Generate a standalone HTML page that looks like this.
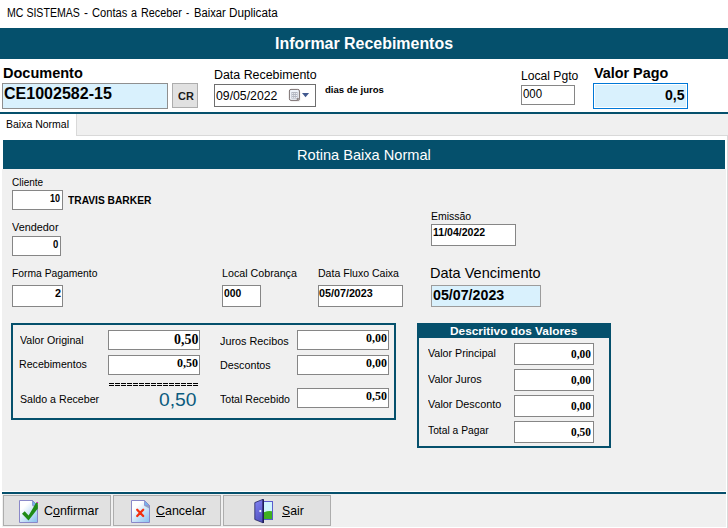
<!DOCTYPE html>
<html><head><meta charset="utf-8"><title>MC SISTEMAS - Contas a Receber - Baixar Duplicata</title>
<style>
html,body{margin:0;padding:0;}
body{width:728px;height:528px;position:relative;overflow:hidden;background:#f0f0f0;font-family:"Liberation Sans",sans-serif;}
body>div,body>svg{position:absolute;}
.t{position:absolute;line-height:1;white-space:pre;transform-origin:0 50%;}
.eq{width:90px;height:3px;}
.eq i{position:absolute;top:0;width:5px;height:3px;border-top:1px solid #000;border-bottom:1px solid #000;box-sizing:border-box;}
</style></head><body>
<div style="left:0px;top:0px;width:728px;height:28px;background:#fff;"></div>
<div id="a1" class="t" style="left:6.56px;top:6.74px;font-size:12px;color:#000;transform:scaleX(0.8810);">MC SISTEMAS</div>
<div id="a2" class="t" style="left:84.20px;top:6.74px;font-size:12px;color:#000;transform:scaleX(0.9860);">-</div>
<div id="a3" class="t" style="left:91.80px;top:6.74px;font-size:12px;color:#000;transform:scaleX(0.9286);">Contas</div>
<div id="a4" class="t" style="left:131.40px;top:6.74px;font-size:12px;color:#000;transform:scaleX(0.8977);">a</div>
<div id="a5" class="t" style="left:140.66px;top:6.74px;font-size:12px;color:#000;transform:scaleX(0.8981);">Receber</div>
<div id="a6" class="t" style="left:185.70px;top:6.74px;font-size:12px;color:#000;transform:scaleX(0.7958);">-</div>
<div id="a7" class="t" style="left:193.56px;top:6.74px;font-size:12px;color:#000;transform:scaleX(0.9312);">Baixar</div>
<div id="a8" class="t" style="left:228.90px;top:6.74px;font-size:12px;color:#000;transform:scaleX(0.9732);">Duplicata</div>
<div style="left:0px;top:28px;width:728px;height:31px;background:#05506c;"></div>
<div id="hdr" class="t" style="left:274.60px;top:36.41px;font-size:16px;color:#fff;transform:scaleX(0.9962);font-weight:bold;">Informar Recebimentos</div>
<div style="left:0px;top:59px;width:728px;height:53px;background:#fff;"></div>
<div id="ldoc" class="t" style="left:2.60px;top:65.20px;font-size:15px;color:#000;transform:scaleX(0.9673);font-weight:bold;">Documento</div>
<div style="left:2px;top:83px;width:166px;height:26px;background:#d9f1fd;border:1px solid #8f8f8f;box-sizing:border-box;"></div>
<div id="vdoc" class="t" style="left:3.60px;top:85.86px;font-size:16px;color:#000;transform:scaleX(1.0014);font-weight:bold;">CE1002582-15</div>
<div style="left:172px;top:83px;width:26px;height:25px;background:#e1e1e1;border:1px solid #adadad;box-sizing:border-box;"></div>
<div id="cr" class="t" style="left:177.80px;top:90.59px;font-size:11px;color:#1a1a1a;transform:scaleX(0.9947);font-weight:bold;">CR</div>
<div id="ldata" class="t" style="left:213.80px;top:68.74px;font-size:12px;color:#000;transform:scaleX(1.0334);">Data Recebimento</div>
<div style="left:214px;top:84px;width:102px;height:23px;background:#fff;border:1px solid #6e6e6e;box-sizing:border-box;"></div>
<div id="vdata" class="t" style="left:216.40px;top:90.48px;font-size:12.6px;color:#000;transform:scaleX(0.9730);">09/05/2022</div>
<svg style="left:288px;top:88px" width="24" height="15" viewBox="0 0 24 15">
<rect x="2.3" y="2.6" width="10" height="11" rx="1.6" fill="#d8d8d8" opacity="0.7"/>
<rect x="1.4" y="1.4" width="10" height="11" rx="1.6" fill="#eef2fa" stroke="#7c7070" stroke-width="1"/>
<rect x="3.4" y="4" width="6.2" height="6.6" fill="#b3b7c3"/>
<path d="M4.2 5.1h1v1h-1zM6.2 5.1h1v1h-1zM8.1 5.1h1v1h-1zM4.2 7h1v1h-1zM6.2 7h1v1h-1zM8.1 7h1v1h-1zM4.2 8.9h1v1h-1zM6.2 8.9h1v1h-1zM8.1 8.9h1v1h-1z" fill="#f4f6fb"/>
<path d="M8.8 12.4V10.2H11.4Z" fill="#7c7070"/>
<path d="M14 4.9H21.1L17.55 9.3Z" fill="#41598f"/></svg>
<div id="dias" class="t" style="left:324.70px;top:85.04px;font-size:9.4px;color:#000;transform:scaleX(1.0176);font-weight:bold;">dias de juros</div>
<div id="llocal" class="t" style="left:520.90px;top:69.74px;font-size:12px;color:#000;transform:scaleX(1.0104);">Local Pgto</div>
<div style="left:521px;top:85px;width:54px;height:20px;background:#fff;border:1px solid #868686;box-sizing:border-box;"></div>
<div id="vlocal" class="t" style="left:522.50px;top:88.44px;font-size:12.3px;color:#000;transform:scaleX(0.9310);">000</div>
<div id="lvalor" class="t" style="left:594.00px;top:65.20px;font-size:15px;color:#000;transform:scaleX(0.9572);font-weight:bold;">Valor Pago</div>
<div style="left:593px;top:83px;width:95px;height:26px;background:#d9f1fd;border:1px solid #0078d7;box-sizing:border-box;box-shadow:inset 0 0 0 1px #fff;"></div>
<div id="vvalor" class="t" style="left:665.20px;top:87.40px;font-size:15px;color:#000;transform:scaleX(0.9400);font-weight:bold;">0,5</div>
<div style="left:0px;top:112px;width:728px;height:2px;background:#05506c;"></div>
<div style="left:0px;top:114px;width:728px;height:414px;background:#f0f0f0;"></div>
<div style="left:0px;top:135px;width:728px;height:393px;background:#fff;border:1px solid #d9d9d9;box-sizing:border-box;border-left:none;border-bottom:none;"></div>
<div style="left:0px;top:114px;width:77px;height:22px;background:#fff;border:1px solid #d9d9d9;box-sizing:border-box;border-left:none;border-top:none;border-bottom:none;"></div>
<div id="tab" class="t" style="left:6.16px;top:118.69px;font-size:11px;color:#000;transform:scaleX(0.9548);">Baixa Normal</div>
<div style="left:2px;top:169px;width:724px;height:322px;background:#f0f0f0;"></div>
<div style="left:3px;top:140px;width:722px;height:29px;background:#05506c;"></div>
<div style="left:2px;top:492px;width:724px;height:2px;background:#05506c;"></div>
<div style="left:2px;top:494px;width:724px;height:33px;background:#f0f0f0;"></div>
<div id="rot" class="t" style="left:296.82px;top:147.30px;font-size:15px;color:#fff;transform:scaleX(0.9726);">Rotina Baixa Normal</div>
<div id="lcli" class="t" style="left:12.40px;top:176.59px;font-size:11px;color:#000;transform:scaleX(0.9082);">Cliente</div>
<div style="left:12px;top:190px;width:51px;height:20px;background:#fff;border:1px solid #868686;box-sizing:border-box;"></div>
<div id="vcli" class="t" style="left:49.70px;top:192.79px;font-size:11px;color:#000;transform:scaleX(0.8192);font-weight:bold;">10</div>
<div id="travis" class="t" style="left:67.80px;top:194.55px;font-size:11.4px;color:#000;transform:scaleX(0.8979);font-weight:bold;">TRAVIS BARKER</div>
<div id="lven" class="t" style="left:12.40px;top:222.09px;font-size:11px;color:#000;transform:scaleX(0.9872);">Vendedor</div>
<div style="left:12px;top:236px;width:49px;height:20px;background:#fff;border:1px solid #868686;box-sizing:border-box;"></div>
<div id="a9" class="t" style="left:52.60px;top:238.79px;font-size:11px;color:#000;transform:scaleX(0.8666);font-weight:bold;">0</div>
<div id="lforma" class="t" style="left:12.16px;top:267.69px;font-size:11px;color:#000;transform:scaleX(0.9378);">Forma Pagamento</div>
<div style="left:12px;top:285px;width:51px;height:22px;background:#fff;border:1px solid #868686;box-sizing:border-box;"></div>
<div id="a10" class="t" style="left:55.40px;top:287.69px;font-size:11px;color:#000;transform:scaleX(0.9810);font-weight:bold;">2</div>
<div id="lcob" class="t" style="left:221.90px;top:267.79px;font-size:11px;color:#000;transform:scaleX(0.9720);">Local Cobrança</div>
<div style="left:222px;top:285px;width:39px;height:22px;background:#fff;border:1px solid #868686;box-sizing:border-box;"></div>
<div id="vcob" class="t" style="left:223.50px;top:287.69px;font-size:11px;color:#000;transform:scaleX(0.9374);font-weight:bold;">000</div>
<div id="lfluxo" class="t" style="left:318.16px;top:267.79px;font-size:11px;color:#000;transform:scaleX(0.9595);">Data Fluxo Caixa</div>
<div style="left:318px;top:285px;width:85px;height:22px;background:#fff;border:1px solid #868686;box-sizing:border-box;"></div>
<div id="vfluxo" class="t" style="left:319.20px;top:287.69px;font-size:11px;color:#000;transform:scaleX(0.9772);font-weight:bold;">05/07/2023</div>
<div id="lemi" class="t" style="left:431.16px;top:210.59px;font-size:11px;color:#000;transform:scaleX(0.9510);">Emissão</div>
<div style="left:431px;top:224px;width:85px;height:22px;background:#fff;border:1px solid #868686;box-sizing:border-box;"></div>
<div id="vemi" class="t" style="left:432.90px;top:227.39px;font-size:11px;color:#000;transform:scaleX(0.9568);font-weight:bold;">11/04/2022</div>
<div id="lvenc" class="t" style="left:429.80px;top:264.90px;font-size:15px;color:#000;transform:scaleX(0.9681);">Data Vencimento</div>
<div style="left:431px;top:285px;width:110px;height:22px;background:#d9f1fd;border:1px solid #9c9c9c;box-sizing:border-box;"></div>
<div id="vvenc" class="t" style="left:432.60px;top:287.20px;font-size:15px;color:#000;transform:scaleX(0.9484);font-weight:bold;">05/07/2023</div>
<div style="left:11px;top:323px;width:385px;height:97px;border:2px solid #05506c;box-sizing:border-box;"></div>
<div id="lvo" class="t" style="left:19.50px;top:334.69px;font-size:11px;color:#000;transform:scaleX(0.9662);">Valor Original</div>
<div style="left:108px;top:330px;width:92px;height:20px;background:#fff;border:1px solid #868686;box-sizing:border-box;"></div>
<div id="vvo" class="t" style="left:173.50px;top:331.94px;font-size:14.4px;color:#000;transform:scaleX(0.9683);font-family:'Liberation Serif',serif;font-weight:bold;">0,50</div>
<div id="lrec" class="t" style="left:18.90px;top:358.59px;font-size:11px;color:#000;transform:scaleX(0.9657);">Recebimentos</div>
<div style="left:108px;top:355px;width:92px;height:20px;background:#fff;border:1px solid #868686;box-sizing:border-box;"></div>
<div id="vrec" class="t" style="left:177.10px;top:357.18px;font-size:12.2px;color:#000;transform:scaleX(0.9855);font-family:'Liberation Serif',serif;font-weight:bold;">0,50</div>
<div class="eq" style="left:109.3px;top:383px"><i style="left:0px"></i><i style="left:6px"></i><i style="left:12px"></i><i style="left:18px"></i><i style="left:24px"></i><i style="left:30px"></i><i style="left:36px"></i><i style="left:42px"></i><i style="left:48px"></i><i style="left:54px"></i><i style="left:60px"></i><i style="left:66px"></i><i style="left:72px"></i><i style="left:78px"></i><i style="left:84px"></i></div>
<div id="lsaldo" class="t" style="left:19.50px;top:393.69px;font-size:11px;color:#000;transform:scaleX(0.9654);">Saldo a Receber</div>
<div id="vsaldo" class="t" style="left:158.70px;top:390.94px;font-size:18.5px;color:#0b5b7e;transform:scaleX(1.0416);">0,50</div>
<div id="ljur" class="t" style="left:220.20px;top:335.69px;font-size:11px;color:#000;transform:scaleX(0.9854);">Juros Recibos</div>
<div style="left:297px;top:330px;width:92px;height:20px;background:#fff;border:1px solid #868686;box-sizing:border-box;"></div>
<div id="vjur" class="t" style="left:366.20px;top:332.15px;font-size:12px;color:#000;transform:scaleX(0.9971);font-family:'Liberation Serif',serif;font-weight:bold;">0,00</div>
<div id="ldesc" class="t" style="left:219.90px;top:360.49px;font-size:11px;color:#000;transform:scaleX(0.9755);">Descontos</div>
<div style="left:297px;top:355px;width:92px;height:20px;background:#fff;border:1px solid #868686;box-sizing:border-box;"></div>
<div id="a11" class="t" style="left:366.20px;top:357.15px;font-size:12px;color:#000;transform:scaleX(0.9971);font-family:'Liberation Serif',serif;font-weight:bold;">0,00</div>
<div id="ltot" class="t" style="left:220.40px;top:394.14px;font-size:11px;color:#000;transform:scaleX(0.9620);">Total Recebido</div>
<div style="left:297px;top:388px;width:92px;height:20px;background:#fff;border:1px solid #868686;box-sizing:border-box;"></div>
<div id="a12" class="t" style="left:366.20px;top:390.05px;font-size:12px;color:#000;transform:scaleX(0.9971);font-family:'Liberation Serif',serif;font-weight:bold;">0,50</div>
<div style="left:417px;top:323px;width:194px;height:125px;border:2px solid #05506c;box-sizing:border-box;"></div>
<div style="left:417px;top:323px;width:194px;height:15px;background:#05506c;"></div>
<div id="descr" class="t" style="left:449.90px;top:325.08px;font-size:11.6px;color:#fff;transform:scaleX(1.0237);font-weight:bold;">Descritivo dos Valores</div>
<div id="lr0" class="t" style="left:427.50px;top:347.59px;font-size:11px;color:#000;transform:scaleX(0.9686);">Valor Principal</div>
<div style="left:514px;top:343px;width:80px;height:22px;background:#fff;border:1px solid #868686;box-sizing:border-box;"></div>
<div id="vr0" class="t" style="left:570.50px;top:348.15px;font-size:12px;color:#000;transform:scaleX(0.9476);font-family:'Liberation Serif',serif;font-weight:bold;">0,00</div>
<div id="lr1" class="t" style="left:427.50px;top:374.14px;font-size:11px;color:#000;transform:scaleX(0.9804);">Valor Juros</div>
<div style="left:514px;top:369px;width:80px;height:22px;background:#fff;border:1px solid #868686;box-sizing:border-box;"></div>
<div id="vr1" class="t" style="left:570.50px;top:374.15px;font-size:12px;color:#000;transform:scaleX(0.9476);font-family:'Liberation Serif',serif;font-weight:bold;">0,00</div>
<div id="lr2" class="t" style="left:427.50px;top:398.59px;font-size:11px;color:#000;transform:scaleX(0.9840);">Valor Desconto</div>
<div style="left:514px;top:395px;width:80px;height:22px;background:#fff;border:1px solid #868686;box-sizing:border-box;"></div>
<div id="vr2" class="t" style="left:570.50px;top:400.15px;font-size:12px;color:#000;transform:scaleX(0.9476);font-family:'Liberation Serif',serif;font-weight:bold;">0,00</div>
<div id="lr3" class="t" style="left:427.50px;top:425.39px;font-size:11px;color:#000;transform:scaleX(0.9345);">Total a Pagar</div>
<div style="left:514px;top:421px;width:80px;height:22px;background:#fff;border:1px solid #868686;box-sizing:border-box;"></div>
<div id="vr3" class="t" style="left:570.50px;top:426.15px;font-size:12px;color:#000;transform:scaleX(0.9476);font-family:'Liberation Serif',serif;font-weight:bold;">0,50</div>
<div style="left:3px;top:495px;width:108px;height:31px;background:#e1e1e1;border:1px solid #adadad;box-sizing:border-box;"></div>
<div style="left:113px;top:495px;width:108px;height:31px;background:#e1e1e1;border:1px solid #adadad;box-sizing:border-box;"></div>
<div style="left:223px;top:495px;width:108px;height:31px;background:#e1e1e1;border:1px solid #adadad;box-sizing:border-box;"></div>
<div id="bconf" class="t" style="left:44.00px;top:505.33px;font-size:12.6px;color:#000;transform:scaleX(0.9889);">Confirmar</div>
<div style="left:53px;top:516px;width:7px;height:1px;background:#000;"></div>
<div id="bcanc" class="t" style="left:156.30px;top:505.33px;font-size:12.6px;color:#000;transform:scaleX(0.9896);">Cancelar</div>
<div style="left:156px;top:516px;width:9px;height:1px;background:#000;"></div>
<div id="bsair" class="t" style="left:281.96px;top:505.33px;font-size:12.6px;color:#000;transform:scaleX(0.9713);">Sair</div>
<div style="left:282px;top:516px;width:8px;height:1px;background:#000;"></div>
<svg style="left:19px;top:500px" width="20" height="24" viewBox="0 0 20 24">
<defs><linearGradient id="pg" x1="0.1" y1="0" x2="0.9" y2="1"><stop offset="0.25" stop-color="#ffffff"/><stop offset="1" stop-color="#8cc3f0"/></linearGradient></defs>
<path d="M0.5 0.5H13.5L18.5 5.5V22.5H0.5Z" fill="url(#pg)" stroke="#8a88c8"/>
<path d="M13.5 0.5V5.5H18.5Z" fill="#74b3ec" stroke="#8a88c8" stroke-width="0.8"/>
<path d="M13.5 5.9H18.2L18.2 8.5Z" fill="#8393b0" opacity="0.8"/>
<path d="M3 13.8L5.7 11.2L9.6 15.6L17.2 2.6L18.8 2.2V8.5L9.5 20.6Z" fill="#1f8b16"/>
<rect x="18" y="2" width="1" height="1" fill="#ff00e0"/>
</svg>
<svg style="left:131px;top:500px" width="20" height="24" viewBox="0 0 20 24">
<path d="M0.5 0.5H13.5L18.5 5.5V22.5H0.5Z" fill="url(#pg)" stroke="#8a88c8"/>
<path d="M13.5 0.5V5.5H18.5Z" fill="#74b3ec" stroke="#8a88c8" stroke-width="0.8"/>
<path d="M13.5 5.9H18.2L18.2 8.5Z" fill="#8393b0" opacity="0.8"/>
<path d="M6.2 9.8L12.2 16M12.2 9.8L6.2 16" stroke="#f2300f" stroke-width="2.3" stroke-linecap="round"/>
</svg>
<svg style="left:253px;top:498px" width="22" height="26" viewBox="0 0 22 26">
<defs><linearGradient id="dg" x1="0" y1="0" x2="0.3" y2="1"><stop offset="0" stop-color="#8485f5"/><stop offset="1" stop-color="#5556c4"/></linearGradient></defs><rect x="10.5" y="3.5" width="9" height="18" fill="#d0f6ff" stroke="#5a5ccc"/>
<path d="M11 14.2Q15 12.6 19 13.2V21H11Z" fill="#3fb020"/>
<path d="M1.8 4.6L10 1.3V24.8L1.8 21.5Z" fill="url(#dg)" stroke="#23245e" stroke-width="0.8"/>
<path d="M9.6 1.2H11V24.9H9.6Z" fill="#1e1f5a"/>
<circle cx="7.3" cy="13.1" r="1.1" fill="#fff"/>
</svg>
</body></html>
